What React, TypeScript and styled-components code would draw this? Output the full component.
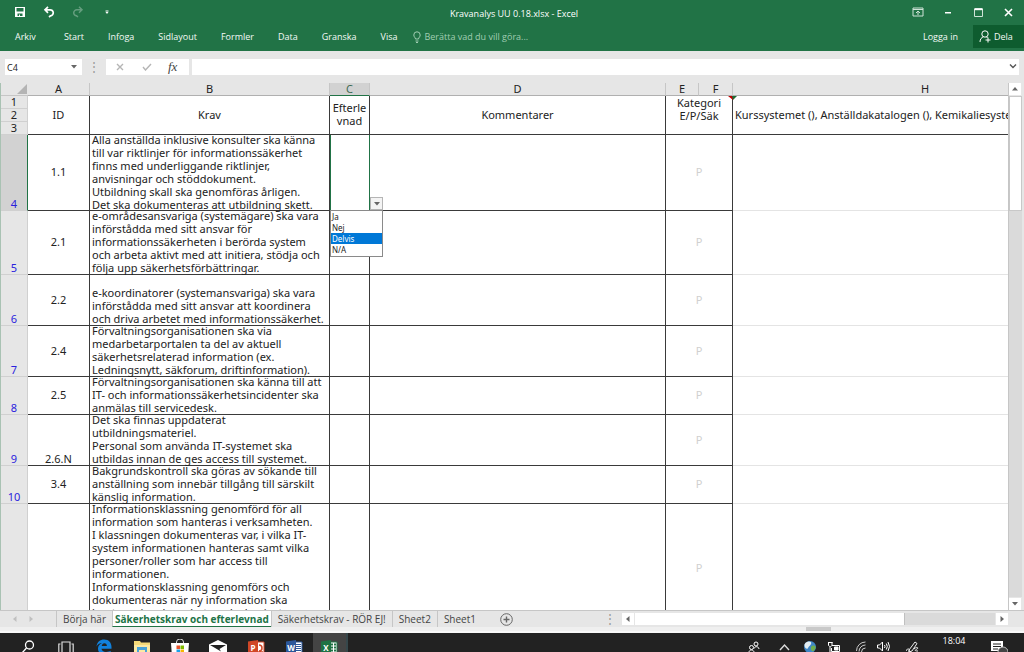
import React from "react";
import styled, { createGlobalStyle, css } from "styled-components";

const GlobalStyle = createGlobalStyle`
  *, *::before, *::after { box-sizing: border-box; }
  body { margin: 0; font-family: "Open Sans", "Noto Sans", sans-serif; font-size: 9px; color: #222; }
  button, input { font: inherit; color: inherit; margin: 0; padding: 0; border: 0; background: none; }
`;

const Window = styled.div`
  display: flex;
  flex-direction: column;
  height: 100vh;
  overflow: hidden;
  background: #e6e6e6;
`;

const TitleBar = styled.header`
  display: grid;
  grid-template-columns: 1fr auto 1fr;
  align-items: center;
  height: 24px;
  padding: 0 10px 0 14px;
  background: #217346;
  color: #fff;
`;

const QuickAccess = styled.div`
  display: flex;
  align-items: center;
  gap: 17px;
`;

const Title = styled.h1`
  margin: 0;
  padding-top: 4px;
  font-size: 9px;
  line-height: 12px;
  font-weight: 400;
`;

const WindowControls = styled.div`
  display: flex;
  justify-content: flex-end;
  gap: 18px;
`;

const IconButton = styled.button<{ $dim?: boolean }>`
  display: flex;
  align-items: center;
  justify-content: center;
  width: 12px;
  height: 14px;
  opacity: ${(p) => (p.$dim ? 0.3 : 1)};
`;

const Ribbon = styled.nav`
  display: flex;
  align-items: center;
  height: 27px;
  padding: 0 0 2px 15px;
  background: #217346;
  color: #f4faf6;
  line-height: 12px;
`;

const RibbonTabs = styled.div`
  display: flex;
  gap: 24px;
  button:first-child { margin-right: 4px; }
`;

const TellMe = styled.label`
  display: flex;
  align-items: center;
  gap: 3px;
  margin-left: 16px;
  color: #a0cdb2;
  input { width: 120px; height: 12px; }
  input::placeholder { color: #a0cdb2; opacity: 1; }
`;

const Account = styled.div`
  display: flex;
  align-items: center;
  gap: 15px;
  margin-left: auto;
`;

const ShareButton = styled.button`
  display: flex;
  align-items: center;
  gap: 3px;
  width: 51px;
  height: 23px;
  padding-left: 6px;
  background: #0e5c2f;
`;

const FormulaBar = styled.div`
  display: flex;
  align-items: center;
  height: 32px;
  padding: 0 5px;
`;

const NameBox = styled.div`
  display: flex;
  align-items: center;
  width: 77px;
  height: 16px;
  padding: 0 4px 0 2px;
  background: #fff;
  input { flex: 1; min-width: 0; }
`;

const Dots = styled.span`
  width: 24px;
  text-align: center;
  font-size: 12px;
  line-height: 16px;
  color: #999;
`;

const FormulaButtons = styled.div`
  display: flex;
  align-items: center;
  justify-content: space-around;
  width: 83px;
  height: 16px;
  margin-right: 3px;
  padding-right: 4px;
  background: #fff;
`;

const FxButton = styled.button`
  font-family: "Liberation Serif", serif;
  font-size: 13px;
  font-style: italic;
  line-height: 14px;
  color: #444;
`;

const FormulaField = styled.div`
  display: flex;
  flex: 1;
  height: 16px;
  background: #fff;
  input { flex: 1; min-width: 0; }
`;

const Workspace = styled.main`
  display: flex;
  flex: 1;
  min-height: 0;
`;

const GridViewport = styled.div`
  flex: 1;
  min-width: 0;
  overflow: hidden;
  border-left: 1px solid #a9c2b3;
`;

/* The last column runs on past the right edge of the viewport. */
const Grid = styled.table`
  width: calc(100% + 110px);
  table-layout: fixed;
  border-collapse: separate;
  border-spacing: 0;
  font-family: "Noto Sans", Verdana, sans-serif;
  font-size: 11px;
  line-height: 13px;
  background: #fff;
`;

const Col = styled.col<{ $w?: number }>`
  ${(p) => p.$w && css`width: ${p.$w}px;`}
`;

const ColumnHead = styled.th<{ $selected?: boolean; $last?: boolean }>`
  height: 13px;
  padding: 0;
  font-weight: 400;
  line-height: 12px;
  color: ${(p) => (p.$selected ? "#3f6b52" : "#222")};
  background: ${(p) => (p.$selected ? "#d2d2d2" : "#e6e6e6")};
  border-bottom: 1px solid ${(p) => (p.$selected ? "#217346" : "#b0b0b0")};
  border-right: 1px solid ${(p) => (p.$last ? "#e6e6e6" : "#c6c6c6")};
`;

const Corner = styled.td`
  padding: 0;
  background: #e6e6e6;
  border-bottom: 1px solid #c6c6c6;
  svg { display: block; margin-left: auto; margin-right: 1px; }
`;

const RowHead = styled.th<{ $h: number; $filtered?: boolean; $selected?: boolean }>`
  height: ${(p) => p.$h}px;
  padding: 0;
  vertical-align: bottom;
  font-weight: 400;
  line-height: 12px;
  color: ${(p) => (p.$filtered ? "#2a22dd" : "#222")};
  background: ${(p) => (p.$selected ? "#d2d2d2" : "#e6e6e6")};
  border-right: 1px solid ${(p) => (p.$selected ? "#217346" : "#d0d0d0")};
  border-bottom: 1px solid #d0d0d0;
`;

const line = "1px solid #3a3a3a";

const HeadCell = styled.th<{ $open?: boolean }>`
  position: relative;
  padding: 0 0 2px;
  font-weight: 400;
  white-space: pre;
  border-right: ${(p) => (p.$open ? "0" : line)};
  border-bottom: ${line};
`;

const CategoryHead = styled(HeadCell)`
  vertical-align: top;
`;

const OverflowHead = styled(HeadCell)`
  padding-left: 2px;
  text-align: left;
  overflow: hidden;
`;

const Cell = styled.td<{ $active?: boolean; $open?: boolean }>`
  position: relative;
  padding: 0;
  border-right: ${(p) => (p.$open ? "0" : p.$active ? "1px solid #217346" : line)};
  border-bottom: ${(p) => (p.$open ? "1px solid #e4e4e4" : line)};
  ${(p) => p.$active && css`box-shadow: inset 1px 0 #217346;`}
`;

const CellText = styled.div<{ $h: number; $align?: string; $end?: boolean; $faint?: boolean }>`
  display: flex;
  align-items: ${(p) => (p.$end ? "flex-end" : "center")};
  justify-content: ${(p) => p.$align ?? "center"};
  height: ${(p) => p.$h - 1}px;
  padding: ${(p) => (p.$end ? "0 2px" : "0 2px 2px")};
  white-space: pre;
  color: ${(p) => (p.$faint ? "#d0d0d0" : "#222")};
`;

const CommentMark = styled.svg`
  position: absolute;
  top: 0;
  right: -5px;
  z-index: 1;
`;

const DropButton = styled.button`
  position: absolute;
  right: -14px;
  bottom: 0;
  z-index: 2;
  display: flex;
  align-items: center;
  justify-content: center;
  width: 13px;
  height: 13px;
  border: 1px solid #b5b5b5;
  background: #f4f4f4;
`;

const DropList = styled.ul`
  position: absolute;
  top: 100%;
  left: 0;
  z-index: 2;
  width: 53px;
  margin: 0;
  padding: 0 0 1px;
  list-style: none;
  border: 1px solid #8a8a8a;
  background: #fff;
  font-family: "Noto Sans", sans-serif;
  font-size: 8px;
`;

const Option = styled.li<{ $on?: boolean }>`
  height: 11px;
  padding-left: 1px;
  line-height: 11px;
  color: ${(p) => (p.$on ? "#fff" : "#222")};
  background: ${(p) => (p.$on ? "#0078d7" : "transparent")};
`;

const VerticalScroll = styled.div`
  display: flex;
  flex-direction: column;
  width: 16px;
  padding-right: 2px;
  border-left: 1px solid #c6c6c6;
  background: #e6e6e6;
`;

const ScrollButton = styled.button`
  display: flex;
  align-items: center;
  justify-content: center;
  width: 12px;
  height: 12px;
  background: #fff;
`;

const VerticalTrack = styled.div`
  flex: 1;
  width: 13px;
  margin: 1px 0;
  background: #dadada;
`;

const VerticalThumb = styled.div`
  height: 23%;
  background: #fff;
  border: 1px solid #c8c8c8;
`;

const SheetBar = styled.div`
  display: flex;
  align-items: center;
  height: 17px;
  padding-right: 16px;
  border-top: 1px solid #c6c6c6;
  font-size: 10px;
  line-height: 14px;
  color: #444;
`;

const SheetArrows = styled.div`
  display: flex;
  align-items: center;
  gap: 8px;
  width: 56px;
  padding-left: 11px;
`;

const SheetTab = styled.button<{ $active?: boolean }>`
  height: 16px;
  padding: 0 6px 1px;
  border-left: 1px solid #c6c6c6;
  white-space: nowrap;
  ${(p) =>
    p.$active &&
    css`
      padding: 0 2px;
      font-weight: 700;
      color: #217346;
      background: #fff;
      border-bottom: 1px solid #217346;
    `}
`;

const AddSheet = styled.button`
  display: flex;
  margin-left: 18px;
`;

const HorizontalScroll = styled.div`
  display: flex;
  align-items: center;
  width: 410px;
  height: 12px;
  margin-left: auto;
`;

const HorizontalTrack = styled.div`
  flex: 1;
  height: 12px;
  margin: 0 1px;
  background: #dadada;
`;

const HorizontalThumb = styled.div`
  width: 75%;
  height: 12px;
  background: #fff;
  border-right: 1px solid #c0c0c0;
`;

const StatusStrip = styled.div`
  display: flex;
  justify-content: flex-end;
  height: 6px;
  padding-right: 193px;
  background: #efefef;
  border-bottom: 2px solid #f8f8f8;
`;

const StatusChip = styled.span`
  width: 25px;
  height: 4px;
  background: #c9c9c9;
`;

const Taskbar = styled.footer`
  display: flex;
  justify-content: space-between;
  height: 19px;
  overflow: hidden;
  background: #222;
  color: #fff;
`;

const TaskGroup = styled.div`
  display: flex;
  padding-left: 9px;
`;

const TaskButton = styled.button<{ $active?: boolean }>`
  display: flex;
  justify-content: center;
  align-items: flex-start;
  width: ${(p) => (p.$active ? 35 : 38)}px;
  height: 30px;
  padding-top: 6px;
  flex: none;
  ${(p) => p.$active && css`background: #444; border-right: 2px solid #36474b;`}
`;

const Tray = styled.div`
  display: flex;
  padding-right: 3px;
`;

const TrayButton = styled.button<{ $w?: number }>`
  display: flex;
  justify-content: center;
  align-items: flex-start;
  width: ${(p) => p.$w ?? 26}px;
  height: 26px;
  padding-top: 8px;
  flex: none;
`;

const Clock = styled.time`
  width: 46px;
  padding-top: 2px;
  text-align: center;
  font-size: 9px;
  line-height: 12px;
`;

const Arrow = ({ dir = "down", color = "#666" }: { dir?: "up" | "down" | "left" | "right"; color?: string }) => {
  const d = { down: "M1 2h6L4 5.5z", up: "M1 5.5h6L4 2z", left: "M5.5 1v6L2 4z", right: "M2.5 1v6L6 4z" }[dir];
  return (
    <svg width="8" height="8" viewBox="0 0 8 8" aria-hidden="true">
      <path d={d} fill={color} />
    </svg>
  );
};

const Chevron = ({ d, w = 8, h = 6, color }: { d: string; w?: number; h?: number; color: string }) => (
  <svg width={w} height={h} viewBox={`0 0 ${w} ${h}`} fill="none" stroke={color} strokeWidth="1.4" aria-hidden="true">
    <path d={d} />
  </svg>
);

const OfficeIcon = ({ letter, color, children }: { letter: string; color: string; children: React.ReactNode }) => (
  <svg width="17" height="18" viewBox="0 0 17 18" aria-hidden="true">
    <path d="M8 3h8v14H8z" fill="#fff" stroke={color} />
    {children}
    <path d="M0 2.6 10 1v17L0 16.4z" fill={color} />
    <text x="5" y="12" fontSize="8" fontWeight="700" fill="#fff" textAnchor="middle">
      {letter}
    </text>
  </svg>
);

type Row = { n: number; h: number; id: string; end?: boolean; text: string };

const rows: Row[] = [
  {
    n: 4,
    h: 76,
    id: "1.1",
    text: "Alla anställda inklusive konsulter ska känna\ntill var riktlinjer för informationssäkerhet\nfinns med underliggande riktlinjer,\nanvisningar och stöddokument.\nUtbildning skall ska genomföras årligen.\nDet ska dokumenteras att utbildning skett.",
  },
  {
    n: 5,
    h: 64,
    id: "2.1",
    text: "e-områdesansvariga (systemägare) ska vara\ninförstådda med sitt ansvar för\ninformationssäkerheten i berörda system\noch arbeta aktivt med att initiera, stödja och\nfölja upp säkerhetsförbättringar.",
  },
  {
    n: 6,
    h: 51,
    id: "2.2",
    text: "\ne-koordinatorer (systemansvariga) ska vara\ninförstådda med sitt ansvar att koordinera\noch driva arbetet med informationssäkerhet.",
  },
  {
    n: 7,
    h: 51,
    id: "2.4",
    text: "Förvaltningsorganisationen ska via\nmedarbetarportalen ta del av aktuell\nsäkerhetsrelaterad information (ex.\nLedningsnytt, säkforum, driftinformation).",
  },
  {
    n: 8,
    h: 38,
    id: "2.5",
    text: "Förvaltningsorganisationen ska känna till att\nIT- och informationssäkerhetsincidenter ska\nanmälas till servicedesk.",
  },
  {
    n: 9,
    h: 51,
    id: "2.6.N",
    end: true,
    text: "Det ska finnas uppdaterat\nutbildningsmateriel.\nPersonal som använda IT-systemet ska\nutbildas innan de ges access till systemet.",
  },
  {
    n: 10,
    h: 38,
    id: "3.4",
    text: "Bakgrundskontroll ska göras av sökande till\nanställning som innebär tillgång till särskilt\nkänslig information.",
  },
  {
    n: 11,
    h: 129,
    id: "",
    text: "Informationsklassning genomförd för all\ninformation som hanteras i verksamheten.\nI klassningen dokumenteras var, i vilka IT-\nsystem informationen hanteras samt vilka\npersoner/roller som har access till\ninformationen.\nInformationsklassning genomförs och\ndokumenteras när ny information ska\nhanteras i verksamheten, dock minst en\ngång per år.",
  },
];

const ribbonTabs = ["Arkiv", "Start", "Infoga", "Sidlayout", "Formler", "Data", "Granska", "Visa"];
const options = ["Ja", "Nej", "Delvis", "N/A"];

export default function App() {
  return (
    <Window>
      <GlobalStyle />
      <TitleBar>
        <QuickAccess>
          <IconButton aria-label="Spara">
            <svg width="12" height="12" viewBox="0 0 12 12" fill="#fff">
              <path d="M1 1h10v10H1zM2.5 2v3.5h7V2zM3.5 7.5V10H5V8.5h1V10h2.5V7.5z" fillRule="evenodd" />
            </svg>
          </IconButton>
          <IconButton aria-label="Ångra">
            <svg width="12" height="12" viewBox="0 0 12 12" fill="none" stroke="#fff" strokeWidth="1.7">
              <path d="M5 .8 2 3.8l3 3M2 3.8h5a3 3 0 0 1 .5 6L6 11" />
            </svg>
          </IconButton>
          <IconButton aria-label="Gör om" $dim>
            <svg width="12" height="12" viewBox="0 0 12 12" fill="none" stroke="#fff" strokeWidth="1.5">
              <path d="m7 .8 3 3-3 3M10 3.8H5a3 3 0 0 0-.5 6L6 11" />
            </svg>
          </IconButton>
          <IconButton aria-label="Anpassa verktygsfältet">
            <svg width="6" height="6" viewBox="0 0 6 6" fill="#fff">
              <path d="M1.5 1.5h3v1h-3zM1.5 3h3L3 5z" />
            </svg>
          </IconButton>
        </QuickAccess>
        <Title>Kravanalys UU 0.18.xlsx - Excel</Title>
        <WindowControls>
          <IconButton aria-label="Menyfliksalternativ">
            <svg width="12" height="10" viewBox="0 0 12 10" fill="none" stroke="#cfe3d7">
              <path d="M1 1h10v8H1zM1 2.5h10M6 8V4M4 6l2-2 2 2" />
            </svg>
          </IconButton>
          <IconButton aria-label="Minimera">
            <svg width="8" height="10" viewBox="0 0 8 10">
              <path d="M1 5h6v1.5H1z" fill="#fff" />
            </svg>
          </IconButton>
          <IconButton aria-label="Maximera">
            <svg width="9" height="9" viewBox="0 0 9 9" fill="none" stroke="#cfe3d7">
              <path d="M.5 1h8v7.5h-8z" />
              <path d="M.5 1.2h8" stroke="#fff" strokeWidth="2" />
            </svg>
          </IconButton>
          <IconButton aria-label="Stäng">
            <svg width="9" height="9" viewBox="0 0 9 9" stroke="#fff" strokeWidth="1.6">
              <path d="m1 1 7 7M8 1 1 8" />
            </svg>
          </IconButton>
        </WindowControls>
      </TitleBar>

      <Ribbon>
        <RibbonTabs>
          {ribbonTabs.map((t) => (
            <button key={t}>{t}</button>
          ))}
        </RibbonTabs>
        <TellMe>
          <svg width="8" height="12" viewBox="0 0 8 12" fill="none" stroke="#a0cdb2">
            <path d="M2.5 8C2.5 6.5.8 6 .8 4a3.2 3.2 0 0 1 6.4 0c0 2-1.7 2.5-1.7 4zM2.5 10h3M3 11.5h2" />
          </svg>
          <input aria-label="Berätta" placeholder="Berätta vad du vill göra..." />
        </TellMe>
        <Account>
          <button>Logga in</button>
          <ShareButton>
            <svg width="12" height="13" viewBox="0 0 12 13" fill="none" stroke="#fff">
              <circle cx="6" cy="4" r="3.2" />
              <path d="M1 12c0-3 1.5-4.5 3.5-5.2M7.5 6.8 8.5 8M9 7.5v5M6.5 10h5" />
            </svg>
            Dela
          </ShareButton>
        </Account>
      </Ribbon>

      <FormulaBar>
        <NameBox>
          <input aria-label="Namnruta" defaultValue="C4" />
          <Arrow />
        </NameBox>
        <Dots>⋮</Dots>
        <FormulaButtons>
          <IconButton aria-label="Avbryt">
            <Chevron d="m1 1 6 6M7 1 1 7" h={8} color="#b5b5b5" />
          </IconButton>
          <IconButton aria-label="Ange">
            <Chevron d="m1 4 2.5 3L9 1" w={10} h={8} color="#b5b5b5" />
          </IconButton>
          <FxButton>fx</FxButton>
        </FormulaButtons>
        <FormulaField>
          <input aria-label="Formel" />
          <IconButton aria-label="Expandera formelfältet">
            <Chevron d="m1 1.5 3 3 3-3" color="#555" />
          </IconButton>
        </FormulaField>
      </FormulaBar>

      <Workspace>
        <GridViewport>
          <Grid>
            <colgroup>
              {[27, 62, 240, 40, 296, 33, 34].map((w, i) => (
                <Col key={i} $w={w} />
              ))}
              <Col />
            </colgroup>
            <thead>
              <tr>
                <Corner>
                  <svg width="10" height="10" viewBox="0 0 10 10" aria-hidden="true">
                    <path d="M10 0v10H0z" fill="#b4b4b4" />
                  </svg>
                </Corner>
                {["A", "B", "C", "D", "E", "F", "H"].map((c) => (
                  <ColumnHead key={c} scope="col" $selected={c === "C"} $last={c === "H"}>
                    {c}
                  </ColumnHead>
                ))}
              </tr>
            </thead>
            <tbody>
              <tr>
                <RowHead $h={13}>1</RowHead>
                <HeadCell rowSpan={3}>ID</HeadCell>
                <HeadCell rowSpan={3}>Krav</HeadCell>
                <HeadCell rowSpan={3}>{"Efterle\nvnad"}</HeadCell>
                <HeadCell rowSpan={3}>Kommentarer</HeadCell>
                <CategoryHead rowSpan={3} colSpan={2}>
                  {"Kategori\nE/P/Säk"}
                  <CommentMark width="9" height="5" viewBox="0 0 9 5" aria-hidden="true">
                    <path d="M0 0h5v4z" fill="#c00000" />
                    <path d="M4 0h5L5 4z" fill="#1e6b35" />
                  </CommentMark>
                </CategoryHead>
                <OverflowHead rowSpan={3} $open>
                  Kurssystemet (), Anställdakatalogen (), Kemikaliesystemet ()
                </OverflowHead>
              </tr>
              <tr>
                <RowHead $h={12}>2</RowHead>
              </tr>
              <tr>
                <RowHead $h={13}>3</RowHead>
              </tr>
              {rows.map((r) => (
                <tr key={r.n}>
                  <RowHead $h={r.h} $filtered $selected={r.n === 4}>
                    {r.n}
                  </RowHead>
                  <Cell>
                    <CellText $h={r.h} $end={r.end}>
                      {r.id}
                    </CellText>
                  </Cell>
                  <Cell>
                    <CellText $h={r.h} $align="flex-start">
                      {r.text}
                    </CellText>
                  </Cell>
                  <Cell $active={r.n === 4}>
                    {r.n === 4 && (
                      <>
                        <DropButton aria-label="Visa alternativ">
                          <Arrow />
                        </DropButton>
                        <DropList>
                          {options.map((o) => (
                            <Option key={o} $on={o === "Delvis"}>
                              {o}
                            </Option>
                          ))}
                        </DropList>
                      </>
                    )}
                  </Cell>
                  <Cell />
                  <Cell colSpan={2}>
                    <CellText $h={r.h} $faint>
                      P
                    </CellText>
                  </Cell>
                  <Cell $open />
                </tr>
              ))}
            </tbody>
          </Grid>
        </GridViewport>
        <VerticalScroll>
          <ScrollButton aria-label="Rulla upp">
            <Arrow dir="up" />
          </ScrollButton>
          <VerticalTrack>
            <VerticalThumb />
          </VerticalTrack>
          <ScrollButton aria-label="Rulla ned">
            <Arrow />
          </ScrollButton>
        </VerticalScroll>
      </Workspace>

      <SheetBar>
        <SheetArrows>
          <Arrow dir="left" color="#c0c0c0" />
          <Arrow dir="right" color="#c0c0c0" />
        </SheetArrows>
        <SheetTab>Börja här</SheetTab>
        <SheetTab $active>Säkerhetskrav och efterlevnad</SheetTab>
        <SheetTab>Säkerhetskrav - RÖR EJ!</SheetTab>
        <SheetTab>Sheet2</SheetTab>
        <SheetTab>Sheet1</SheetTab>
        <AddSheet aria-label="Nytt blad">
          <svg width="13" height="13" viewBox="0 0 13 13" fill="none" stroke="#666">
            <circle cx="6.5" cy="6.5" r="5.8" />
            <path d="M6.5 3.5v6M3.5 6.5h6" strokeWidth="1.4" />
          </svg>
        </AddSheet>
        <HorizontalScroll>
          <Dots>⋮</Dots>
          <ScrollButton aria-label="Rulla vänster">
            <Arrow dir="left" />
          </ScrollButton>
          <HorizontalTrack>
            <HorizontalThumb />
          </HorizontalTrack>
          <ScrollButton aria-label="Rulla höger">
            <Arrow dir="right" />
          </ScrollButton>
        </HorizontalScroll>
      </SheetBar>

      <StatusStrip>
        <StatusChip />
      </StatusStrip>

      <Taskbar>
        <TaskGroup>
          <TaskButton aria-label="Sök">
            <svg width="13" height="15" viewBox="0 0 13 15" fill="none" stroke="#fff" strokeWidth="1.3">
              <circle cx="7.5" cy="6" r="4" />
              <path d="M4.5 9 0 14" />
            </svg>
          </TaskButton>
          <TaskButton aria-label="Aktivitetsvy">
            <svg width="16" height="16" viewBox="0 0 16 16" fill="none" stroke="#ddd" strokeWidth="1.2">
              <path d="M4 3h8v14H4zM2.5 5H.8v12M13.5 5h1.7v12" />
            </svg>
          </TaskButton>
          <TaskButton aria-label="Edge">
            <svg width="16" height="16" viewBox="0 0 16 16" aria-hidden="true">
              <path d="M.5 7.5C1 3 4 .5 8.2.5 13 .5 15.5 4 15.5 8v1.8H5.5c.2 2 2 3.2 4.5 3.2 2 0 3.5-.5 4.7-1.2V15c-1.5.7-3.2 1-5 1C5 16 2 13.5 2 9.8 2 7 3.5 5 6 4 3.5 4 1.5 5.5.5 7.5zM5.7 7h5.2C10.9 5.3 10 4.2 8.4 4.2 7 4.2 6 5.3 5.7 7z" fill="#1181dc" />
            </svg>
          </TaskButton>
          <TaskButton aria-label="Utforskaren">
            <svg width="16" height="16" viewBox="0 0 16 16" aria-hidden="true">
              <path d="M0 2h6l1 1.5h9V16H0z" fill="#f5d978" />
              <path d="M0 6h16v10H0z" fill="#fbe9a4" />
              <path d="M3 8h10v8h-2v-5H5v5H3z" fill="#4aa3d8" />
            </svg>
          </TaskButton>
          <TaskButton aria-label="Store">
            <svg width="18" height="18" viewBox="0 0 18 18" aria-hidden="true">
              <path d="M5.5 5V3a3.5 3 0 0 1 7 0v2" fill="none" stroke="#ddd" />
              <path d="M0 4h18l-1 14H1z" fill="#fff" />
              <path d="M5.5 6.5H9V10H5.5z" fill="#e8532b" />
              <path d="M9.5 6.5H13V10H9.5z" fill="#7fba00" />
              <path d="M5.5 10.5H9V14H5.5z" fill="#1ca1e8" />
              <path d="M9.5 10.5H13V14H9.5z" fill="#f7b500" />
            </svg>
          </TaskButton>
          <TaskButton aria-label="E-post">
            <svg width="18" height="16" viewBox="0 0 18 16" aria-hidden="true">
              <path d="M0 5.5 9 1l9 4.5V16H0z" fill="#fff" />
              <path d="M1 6h16l-6.5 4 1.5 2.5z" fill="#222" />
            </svg>
          </TaskButton>
          <TaskButton aria-label="PowerPoint">
            <OfficeIcon letter="P" color="#d04727">
              <path d="M11 6a3 3 0 1 1 0 6M10 13h5" stroke="#d04727" strokeWidth="1.5" fill="none" />
            </OfficeIcon>
          </TaskButton>
          <TaskButton aria-label="Word">
            <OfficeIcon letter="W" color="#2b579a">
              <path d="M10 5.5h5M10 7.5h5M10 9.5h5M10 11.5h5" stroke="#2b579a" />
            </OfficeIcon>
          </TaskButton>
          <TaskButton aria-label="Excel" $active>
            <OfficeIcon letter="X" color="#1f7244">
              <path d="M10 5.5h5M10 8.5h5M10 11.5h5" stroke="#1f7244" strokeWidth="2" strokeDasharray="2 1" />
            </OfficeIcon>
          </TaskButton>
        </TaskGroup>
        <Tray>
          <TrayButton aria-label="Kontakter">
            <svg width="12" height="12" viewBox="0 0 12 12" fill="none" stroke="#fff">
              <circle cx="8" cy="3" r="2" />
              <circle cx="3.5" cy="6.5" r="2" />
              <path d="M6 7.5c1-2.5 4.5-2.5 5 .5M.8 12c0-4 5.2-4 5.5 0" />
            </svg>
          </TrayButton>
          <TrayButton aria-label="Visa dolda ikoner" $w={34}>
            <Chevron d="m1 9 4.5-5L10 9" w={11} h={10} color="#ddd" />
          </TrayButton>
          <TrayButton aria-label="Webb" $w={18}>
            <svg width="12" height="12" viewBox="0 0 12 12" aria-hidden="true">
              <circle cx="6" cy="6" r="6" fill="#3f86c6" />
              <path d="M3 1c3-1 5 0 4 2S5 5 4 7 1 7 .5 5 1.5 1.5 3 1z" fill="#e4eef2" />
              <path d="M8 5c2-1 4 0 3.5 2S9 11 8 10 6 6 8 5z" fill="#6fae4e" />
            </svg>
          </TrayButton>
          <TrayButton aria-label="Batteri" $w={30}>
            <svg width="13" height="12" viewBox="0 0 13 12" fill="none" stroke="#fff">
              <path d="M4 4.5h7.5v6H3.5V7M.5 1v3c0 2 3.5 2 3.5 0V1M0 1.5h4.5M2 6v5" />
              <path d="M6.5 6h3.5v3H6.5z" fill="#fff" />
            </svg>
          </TrayButton>
          <TrayButton aria-label="Nätverk" $w={24}>
            <svg width="10" height="12" viewBox="0 0 10 12" fill="none" stroke="#ccc">
              <path d="M.5 10A9 9 0 0 1 9.5 1M3 10.5A6.5 6.5 0 0 1 9.5 4M5.5 11A4 4 0 0 1 9.5 7" />
            </svg>
          </TrayButton>
          <TrayButton aria-label="Volym" $w={20}>
            <svg width="13" height="11" viewBox="0 0 13 11" fill="none" stroke="#fff">
              <path d="M.5 4h2L5.5 1v9l-3-3h-2zM7.5 4q1 1.5 0 3M9.3 2.5q2 3 0 6M11 1q3 4.5 0 9" />
            </svg>
          </TrayButton>
          <TrayButton aria-label="Penna" $w={38}>
            <svg width="13" height="12" viewBox="0 0 13 12" fill="none" stroke="#eee">
              <path d="m3 9 6-8 2 1.5L6 10l-3 1zM0 10c2-4 4-2 3 1M8 8c3-3 5-1 3 0S8 10 12 10" />
            </svg>
          </TrayButton>
          <Clock>18:04</Clock>
          <TrayButton aria-label="Meddelandecenter" $w={44}>
            <svg width="17" height="14" viewBox="0 0 17 14" aria-hidden="true">
              <path d="M0 0h12v10H0z" fill="#fff" />
              <path d="M2 3h8M2 5.5h8M2 8h5" stroke="#222" />
              <circle cx="12" cy="11" r="5" fill="#444" stroke="#bbb" />
            </svg>
          </TrayButton>
        </Tray>
      </Taskbar>
    </Window>
  );
}
